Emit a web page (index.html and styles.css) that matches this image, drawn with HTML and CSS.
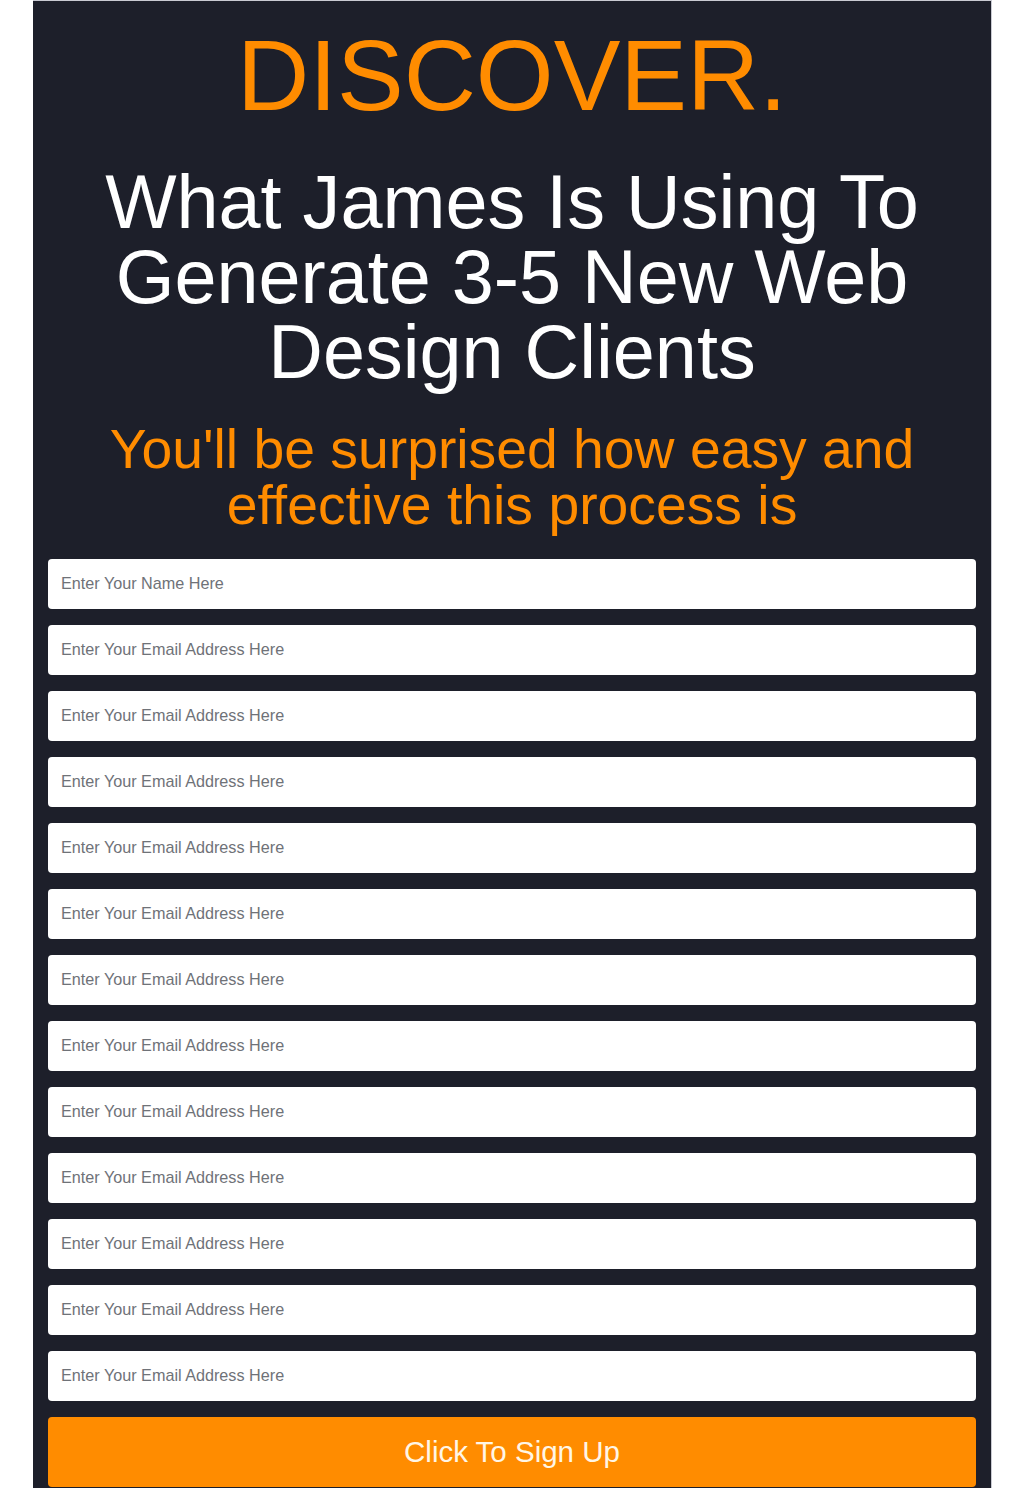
FILE: index.html
```html
<!DOCTYPE html>
<html>
<head>
<meta charset="utf-8">
<link rel="stylesheet" href="styles.css">
</head>
<body>
<div class="panel">
  <h1 class="kicker">DISCOVER.</h1>
  <h2 class="headline">What James Is Using To Generate 3-5 New Web Design Clients</h2>
  <p class="sub">You'll be surprised how easy and effective this process is</p>
  <form class="form">
    <input class="field" type="text" placeholder="Enter Your Name Here">
    <input class="field" type="email" placeholder="Enter Your Email Address Here">
    <input class="field" type="email" placeholder="Enter Your Email Address Here">
    <input class="field" type="email" placeholder="Enter Your Email Address Here">
    <input class="field" type="email" placeholder="Enter Your Email Address Here">
    <input class="field" type="email" placeholder="Enter Your Email Address Here">
    <input class="field" type="email" placeholder="Enter Your Email Address Here">
    <input class="field" type="email" placeholder="Enter Your Email Address Here">
    <input class="field" type="email" placeholder="Enter Your Email Address Here">
    <input class="field" type="email" placeholder="Enter Your Email Address Here">
    <input class="field" type="email" placeholder="Enter Your Email Address Here">
    <input class="field" type="email" placeholder="Enter Your Email Address Here">
    <input class="field" type="email" placeholder="Enter Your Email Address Here">
    <button class="submit" type="button">Click To Sign Up</button>
  </form>
</div>
</body>
</html>
```

FILE: styles.css
```css
html, body {
  margin: 0;
  padding: 0;
  background: #ffffff;
}
body {
  font-family: "Liberation Sans", Arial, sans-serif;
}
.panel {
  width: 959px;
  margin: 0 0 0 33px;
  box-sizing: border-box;
  background: #1d1f2a;
  border-top: 1px solid #c9cad2;
  border-right: 1px solid #c9cad2;
  padding: 24px 15px 0;
  display: flex;
  flex-direction: column;
  align-items: stretch;
  height: 1488px;
}
.kicker {
  margin: 0;
  font-weight: 400;
  font-size: 100px;
  line-height: 100px;
  color: #ff8c00;
  text-align: center;
}
.headline {
  margin: 40px 0 0;
  font-weight: 400;
  font-size: 75.6px;
  line-height: 75px;
  color: #ffffff;
  text-align: center;
}
.sub {
  margin: 31px 0 0;
  font-size: 55.3px;
  line-height: 56px;
  color: #ff8c00;
  text-align: center;
}
.form {
  margin-top: 26px;
  display: flex;
  flex-direction: column;
  gap: 16px;
}
.field {
  display: block;
  box-sizing: border-box;
  width: 100%;
  height: 50px;
  margin: 0;
  border: none;
  border-radius: 4px;
  background: #ffffff;
  padding: 0 13px 2px;
  font-family: "Liberation Sans", Arial, sans-serif;
  font-size: 16.2px;
  color: #333;
}
.field::placeholder {
  color: #6f7278;
}
.submit {
  display: block;
  width: 100%;
  height: 70px;
  margin: 0;
  border: none;
  border-radius: 4px;
  background: #ff8c00;
  color: #fff6e6;
  font-family: "Liberation Sans", Arial, sans-serif;
  font-size: 29.5px;
  cursor: pointer;
}
```
